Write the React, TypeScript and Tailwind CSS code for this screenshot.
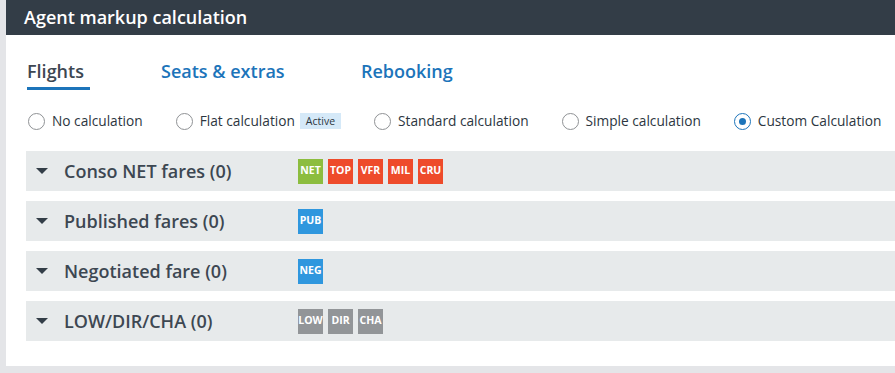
import { clsx } from "clsx";

const font = { fontFamily: '"Open Sans", "Noto Sans", sans-serif' };

type Tag = { code: string; tone: "green" | "red" | "blue" | "gray" };

const toneClass: Record<Tag["tone"], string> = {
  green: "bg-[#8cbd3f]",
  red: "bg-[#ee4b2b]",
  blue: "bg-[#2f97de]",
  gray: "bg-[#929598]",
};

const groups: { label: string; tags: Tag[] }[] = [
  {
    label: "Conso NET fares (0)",
    tags: [
      { code: "NET", tone: "green" },
      { code: "TOP", tone: "red" },
      { code: "VFR", tone: "red" },
      { code: "MIL", tone: "red" },
      { code: "CRU", tone: "red" },
    ],
  },
  { label: "Published fares (0)", tags: [{ code: "PUB", tone: "blue" }] },
  { label: "Negotiated fare (0)", tags: [{ code: "NEG", tone: "blue" }] },
  {
    label: "LOW/DIR/CHA (0)",
    tags: [
      { code: "LOW", tone: "gray" },
      { code: "DIR", tone: "gray" },
      { code: "CHA", tone: "gray" },
    ],
  },
];

const options = [
  { label: "No calculation" },
  { label: "Flat calculation", badge: true },
  { label: "Standard calculation" },
  { label: "Simple calculation" },
  { label: "Custom Calculation", checked: true },
];

function Radio({ checked }: { checked?: boolean }) {
  return (
    <span
      className={clsx(
        "flex h-[17px] w-[17px] shrink-0 items-center justify-center rounded-full border bg-white",
        checked ? "border-[#1c74ba]" : "border-[#8f9295]"
      )}
    >
      {checked ? <span className="h-[7px] w-[7px] rounded-full bg-[#1c74ba]" /> : null}
    </span>
  );
}

export default function App() {
  return (
    <div className="h-[373px] w-[895px] overflow-hidden bg-[#e4e5e8] pl-[6px]" style={font}>
      <div className="h-[366px] bg-white">
        <div className="flex h-[35px] items-center bg-[#333d47] pl-[18px] text-[18px] font-semibold text-white">
          Agent markup calculation
        </div>

        <div className="flex pl-[21px] pt-[24px] text-[18px] font-semibold">
          <div className="flex w-[134px] flex-col">
            <span className="leading-[24px] text-[#3d4752]">Flights</span>
            <span className="mt-[4px] h-[3px] w-[63px] bg-[#1c74ba]" />
          </div>
          <span className="w-[200px] leading-[24px] text-[#1c74ba]">Seats &amp; extras</span>
          <span className="leading-[24px] text-[#1c74ba]">Rebooking</span>
        </div>

        <div className="mt-[22px] flex items-center gap-[33px] pl-[22px] text-[13.7px] text-[#2c3640]">
          {options.map((o) => (
            <label key={o.label} className="flex items-center">
              <Radio checked={o.checked} />
              <span className="ml-[7px] leading-[18px]">{o.label}</span>
              {o.badge ? (
                <span className="ml-[5px] bg-[#d5e9f8] px-[6px] text-[10.5px] leading-[16px] text-[#2c3640]">
                  Active
                </span>
              ) : null}
            </label>
          ))}
        </div>

        <div className="mt-[21px] flex flex-col gap-[10px] pl-[20px]">
          {groups.map((g) => (
            <div key={g.label} className="flex h-[40px] items-center bg-[#e7eaeb]">
              <svg className="ml-[10px] h-[6px] w-[12px]" viewBox="0 0 12 6">
                <path d="M0 0h12L6 6z" fill="#333d47" />
              </svg>
              <span className="ml-[16px] w-[234px] text-[18px] font-semibold text-[#3d4752]">{g.label}</span>
              <div className="flex gap-[5px]">
                {g.tags.map((t) => (
                  <span
                    key={t.code}
                    className={clsx(
                      "flex h-[25px] w-[25px] items-center justify-center text-[10.5px] font-bold text-white",
                      toneClass[t.tone]
                    )}
                  >
                    {t.code}
                  </span>
                ))}
              </div>
            </div>
          ))}
        </div>
      </div>
    </div>
  );
}
